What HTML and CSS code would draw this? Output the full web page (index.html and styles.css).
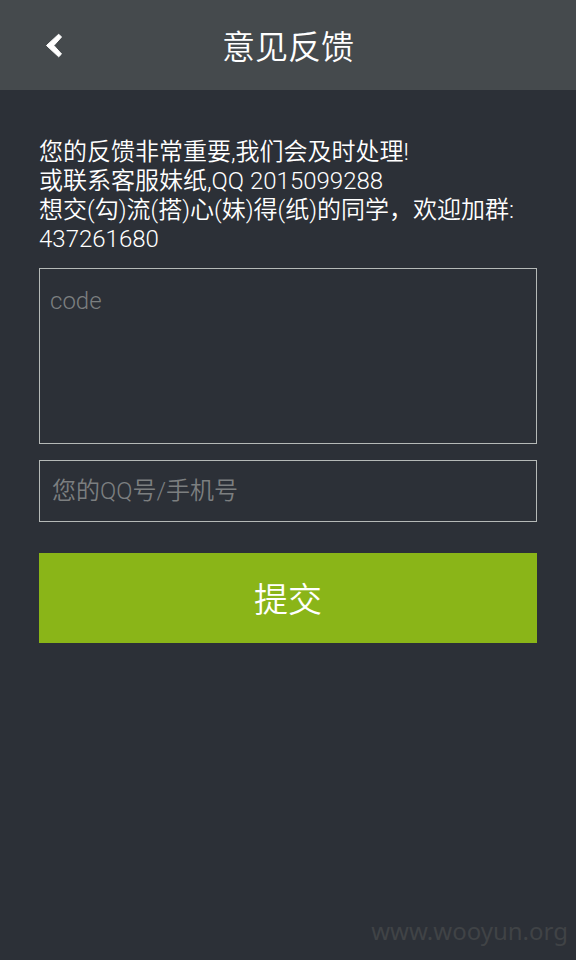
FILE: index.html
```html
<!DOCTYPE html>
<html lang="zh-CN">
<head>
<meta charset="utf-8">
<meta name="viewport" content="width=device-width, initial-scale=1">
<title>意见反馈</title>
<link rel="stylesheet" href="styles.css">
</head>
<body>
<header class="topbar">
  <button class="back" type="button" aria-label="返回">
    <svg viewBox="0 0 20 28" width="20" height="28" aria-hidden="true"><path d="M14.700 3.200 17.500 6 9.900 14.500 17.500 23 14.700 25.800 2.500 14.500Z" /></svg>
  </button>
  <h1 class="title">意见反馈</h1>
</header>
<main class="content">
  <p class="intro">您的反馈非常重要,我们会及时处理!<br>或联系客服妹纸,QQ 2015099288<br>想交(勾)流(搭)心(妹)得(纸)的同学，欢迎加群:<br>437261680</p>
  <form class="form">
    <textarea class="field message" aria-label="反馈内容" placeholder="code"></textarea>
    <input class="field contact" type="text" aria-label="联系方式" placeholder="您的QQ号/手机号">
    <button class="submit" type="button">提交</button>
  </form>
</main>
<footer class="watermark">www.wooyun.org</footer>
</body>
</html>
```
FILE: styles.css
```css
* {
  box-sizing: border-box;
}

body {
  margin: 0;
  min-height: 100vh;
  display: flex;
  flex-direction: column;
  background: #2c3037;
  color: #fff;
  font-family: Roboto, "Noto Sans CJK SC", sans-serif;
  font-weight: 350;
}

.topbar {
  display: grid;
  grid-template-columns: 108px 1fr 108px;
  align-items: center;
  height: 90px;
  background: #454a4d;
}

.back {
  display: flex;
  align-items: center;
  justify-content: center;
  height: 90px;
  padding: 0;
  border: 0;
  background: none;
}

.back path {
  fill: #fff;
  stroke: #fff;
  stroke-width: 1;
  stroke-linejoin: round;
}

.title {
  margin: 0;
  padding-top: 6px;
  font-size: 33px;
  font-weight: 350;
  line-height: 48px;
  text-align: center;
}

.content {
  flex: 1;
  padding: 48px 39px 0;
}

.intro {
  margin: 0 0 14px;
  font-size: 24px;
  line-height: 29px;
}

.form {
  display: flex;
  flex-direction: column;
}

.field {
  width: 100%;
  border: 1px solid #b5b9b7;
  border-radius: 0;
  background: transparent;
  color: #fff;
  font: inherit;
  font-size: 24px;
  outline: none;
}

.field::placeholder {
  color: #7c7f80;
  opacity: 1;
}

.message {
  display: block;
  height: 176px;
  padding: 18px 10px;
  line-height: 29px;
  resize: none;
}

.contact {
  height: 62px;
  margin-top: 16px;
  padding: 0 12px;
}

.submit {
  height: 90px;
  margin-top: 31px;
  padding: 0 0 2px;
  border: 0;
  background: #8ab518;
  color: #fff;
  font: inherit;
  font-size: 34px;
}

.watermark {
  padding: 0 8px 12px;
  color: #404346;
  font: 400 24px/34px "Noto Sans", sans-serif;
  text-align: right;
}
```
